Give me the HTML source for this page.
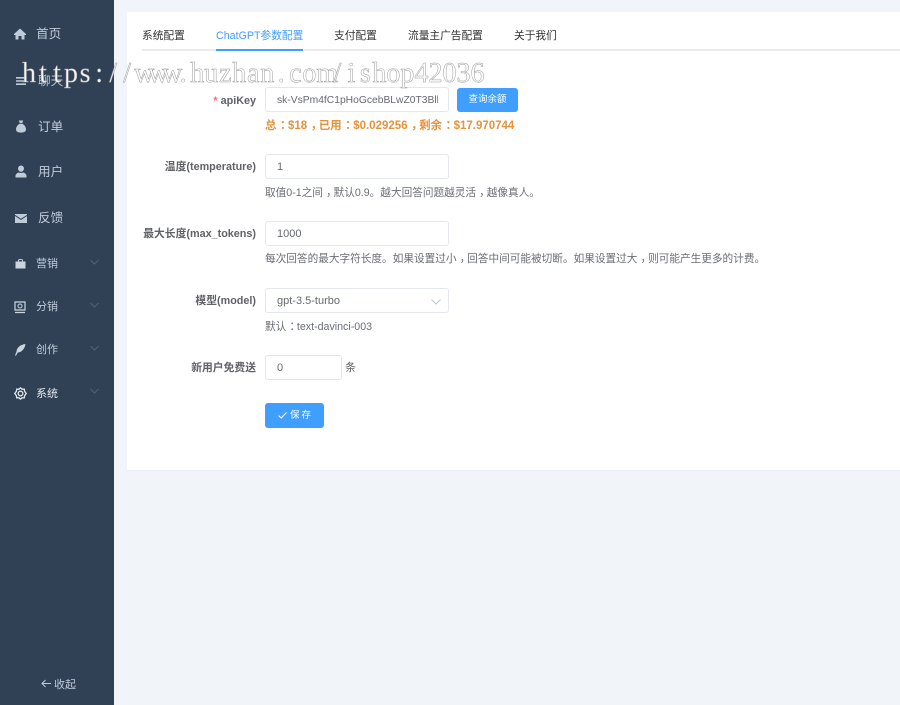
<!DOCTYPE html>
<html lang="zh">
<head>
<meta charset="utf-8">
<style>
*{box-sizing:border-box}
html,body{margin:0;padding:0;width:900px;height:705px;overflow:hidden;background:#f1f4f8;font-family:"Liberation Sans","Noto Sans CJK SC",sans-serif;}
#all{position:absolute;left:0;top:0;width:900px;height:705px;filter:blur(.3px)}
.a{position:absolute;white-space:nowrap}
#side{position:absolute;left:0;top:0;width:114px;height:705px;background:#304156}
.m{position:absolute;left:36px;color:#bfcbd9;font-size:12.6px;line-height:20px;white-space:nowrap}
.s{font-size:11px;left:36px}
.ic{position:absolute}
.chev{position:absolute;left:90px;width:9px;height:6px}
#card{position:absolute;left:127px;top:12px;width:773px;height:459px;background:#fff;border-bottom:1px solid #ebeef5}
.tab{position:absolute;top:29px;font-size:10.7px;line-height:14px;color:#303133;white-space:nowrap}
.lab{position:absolute;right:644px;font-size:10.8px;font-weight:bold;color:#606266;line-height:16px;white-space:nowrap}
.inp{position:absolute;left:265px;width:184px;height:25px;border:1px solid #e4e7ed;border-radius:3px;background:#fff;color:#66696f;font-size:11px;line-height:25px;padding-left:11px;white-space:nowrap;overflow:hidden}
.tip{position:absolute;left:265px;font-size:10.65px;color:#6b6e75;line-height:16px;white-space:nowrap}
.p{display:inline-block;width:1em;transform:translate(.3em,-.05em)}
#wm{position:absolute;left:22px;top:57px;font-family:"Liberation Serif",serif;font-size:28px;line-height:34px;color:rgba(255,255,255,.95);-webkit-text-stroke:.5px #9c9c9c;white-space:nowrap}
#wm span{display:inline-block;width:14.03px;text-align:center}
</style>
</head>
<body>
<div id="all">
<div id="side">
  <svg class="ic" style="left:14px;top:28px" width="12" height="12" viewBox="0 0 12 12"><path fill="#bfcbd9" d="M6 .5 0 6v1h1.500v4.500h3V8h3v3.500h3V7H12V6z"/></svg>
  <div class="m" style="top:24px">首页</div>

  <svg class="ic" style="left:16px;top:76px" width="10" height="10" viewBox="0 0 10 10"><path fill="#bfcbd9" d="M0 1h10v1.600H0zM0 4.200h10v1.600H0zM0 7.400h10V9H0z"/></svg>
  <div class="m" style="top:71px;left:38px">聊天</div>

  <svg class="ic" style="left:15px;top:120px" width="12" height="13" viewBox="0 0 12 13"><path fill="#bfcbd9" d="M3.800.5 8.200.5 7.300 3H4.700zM4.500 3.800h3C9.800 5.300 11 7.200 11 9.300 11 11.700 9.300 12.600 6 12.600S1 11.700 1 9.300C1 7.200 2.200 5.300 4.500 3.800z"/></svg>
  <div class="m" style="top:117px;left:38px">订单</div>

  <svg class="ic" style="left:15px;top:165px" width="12" height="13" viewBox="0 0 12 13"><path fill="#bfcbd9" d="M6 .5a3 3 0 0 1 3 3 3.300 3.300 0 0 1-3 3.300 3.300 3.300 0 0 1-3-3.300 3 3 0 0 1 3-3zM.5 12.500V11c0-2 2-3.300 3.300-3.500.7.500 3.700.500 4.400 0 1.300.2 3.300 1.500 3.300 3.500v1.500z"/></svg>
  <div class="m" style="top:162px;left:38px">用户</div>

  <svg class="ic" style="left:15px;top:214px" width="12" height="9" viewBox="0 0 12 9"><path fill="#bfcbd9" d="M0 0h12v.9L6 4.800 0 .9zM0 2 6 6 12 2v7H0z"/></svg>
  <div class="m" style="top:208px;left:38px">反馈</div>

  <svg class="ic" style="left:15px;top:258px" width="11" height="11" viewBox="0 0 11 11"><path fill="none" stroke="#bfcbd9" d="M3.500 4V2.500C3.500 1 7.500 1 7.500 2.500V4"/><path fill="#cbd5e0" d="M.5 3.500h10v7H.5z"/></svg>
  <div class="m s" style="top:254px">营销</div>
  <svg class="chev" style="top:259px" viewBox="0 0 9 6"><path d="M.5 1 4.500 5 8.500 1" fill="none" stroke="#4f6279" stroke-width="1"/></svg>

  <svg class="ic" style="left:14px;top:301px" width="12" height="13" viewBox="0 0 12 13"><path fill="none" stroke="#cbd5e0" stroke-width="1.200" d="M1 1h10v8H1zM1 11.500h10"/><circle cx="6" cy="5" r="2" fill="none" stroke="#cbd5e0"/></svg>
  <div class="m s" style="top:297px">分销</div>
  <svg class="chev" style="top:302px" viewBox="0 0 9 6"><path d="M.5 1 4.500 5 8.500 1" fill="none" stroke="#4f6279" stroke-width="1"/></svg>

  <svg class="ic" style="left:14px;top:344px" width="12" height="12" viewBox="0 0 12 12"><path fill="#cbd5e0" d="M11.500 0C6.500.5 2.800 3.500 2.500 7.500L1 11.500l1 .3L3.800 8.500C8 8.300 10.800 4.500 11.500 0z"/></svg>
  <div class="m s" style="top:340px">创作</div>
  <svg class="chev" style="top:345px" viewBox="0 0 9 6"><path d="M.5 1 4.500 5 8.500 1" fill="none" stroke="#4f6279" stroke-width="1"/></svg>

  <svg class="ic" style="left:14px;top:387px" width="13" height="13" viewBox="0 0 13 13"><path fill="none" stroke="#e3e8ee" stroke-width="1.300" d="M6.500.8 8 2.200 10.300 2.200 10.600 4.300 12.200 6.500 10.600 8.700 10.300 10.800 8 10.800 6.500 12.200 5 10.800 2.700 10.800 2.400 8.700.8 6.500 2.400 4.300 2.700 2.200 5 2.200z"/><circle cx="6.500" cy="6.500" r="2.300" fill="none" stroke="#e3e8ee" stroke-width="1.300"/></svg>
  <div class="m s" style="top:384px;color:#e3e8ee">系统</div>
  <svg class="chev" style="top:388px" viewBox="0 0 9 6"><path d="M.5 1 4.500 5 8.500 1" fill="none" stroke="#4f6279" stroke-width="1"/></svg>

  <svg class="ic" style="left:41px;top:679px" width="10" height="9" viewBox="0 0 10 9"><path d="M4.500 1 1 4.500 4.500 8M1 4.500h9" fill="none" stroke="#bfcbd9" stroke-width="1"/></svg>
  <div class="m s" style="top:675px;left:54px">收起</div>
</div>

<div id="card"></div>
<div class="a" style="left:142px;top:49px;width:758px;height:2px;background:#e9ecf0"></div>
<div class="a" style="left:216px;top:49px;width:87px;height:2px;background:#409eff"></div>
<div class="tab" style="left:142px">系统配置</div>
<div class="tab" style="left:216px;color:#409eff">ChatGPT参数配置</div>
<div class="tab" style="left:334px">支付配置</div>
<div class="tab" style="left:408px">流量主广告配置</div>
<div class="tab" style="left:514px">关于我们</div>

<div class="lab" style="top:93px"><span style="color:#f56c6c">* </span>apiKey</div>
<div class="inp" style="top:87px;padding-right:0"><span style="display:block;width:161px;overflow:hidden;font-size:10.3px">sk-VsPm4fC1pHoGcebBLwZ0T3BlbkFJ</span></div>
<div class="a" style="left:457px;top:88px;width:61px;height:24px;background:#409eff;border-radius:3px;color:#fff;font-size:9.500px;line-height:24px;text-align:center">查询余额</div>
<div class="a" style="left:265px;top:118px;font-size:11.5px;font-weight:bold;color:#e6923a;line-height:16px">总<span class="p">：</span>$18<span class="p">，</span>已用<span class="p">：</span>$0.029256<span class="p">，</span>剩余<span class="p">：</span>$17.970744</div>

<div class="lab" style="top:159px">温度(temperature)</div>
<div class="inp" style="top:154px">1</div>
<div class="tip" style="top:185px">取值0-1之间<span class="p">，</span>默认0.9。越大回答问题越灵活<span class="p">，</span>越像真人。</div>

<div class="lab" style="top:226px">最大长度(max_tokens)</div>
<div class="inp" style="top:221px">1000</div>
<div class="tip" style="top:251px">每次回答的最大字符长度。如果设置过小<span class="p">，</span>回答中间可能被切断。如果设置过大<span class="p">，</span>则可能产生更多的计费。</div>

<div class="lab" style="top:293px">模型(model)</div>
<div class="inp" style="top:288px">gpt-3.5-turbo</div>
<svg class="a" style="left:431px;top:299px" width="10" height="6" viewBox="0 0 10 6"><path d="M.5.500 5 5 9.500.500" fill="none" stroke="#c0c4cc" stroke-width="1"/></svg>
<div class="tip" style="top:319px">默认<span class="p">：</span>text-davinci-003</div>

<div class="lab" style="top:360px">新用户免费送</div>
<div class="inp" style="top:355px;width:77px">0</div>
<div class="a" style="left:345px;top:360px;font-size:11px;line-height:16px;color:#606266">条</div>

<div class="a" style="left:265px;top:403px;width:59px;height:25px;background:#409eff;border-radius:3px"></div>
<svg class="a" style="left:278px;top:412px" width="9" height="7" viewBox="0 0 9 7"><path d="M.5 3.500 3.300 6 8.500.5" fill="none" stroke="#fff" stroke-width="1"/></svg>
<div class="a" style="left:290px;top:408px;font-size:9.500px;line-height:15px;color:#fff;letter-spacing:2px">保存</div>

<div id="wm"><span>h</span><span>t</span><span>t</span><span>p</span><span>s</span><span>:</span><span>/</span><span>/</span><span>w</span><span>w</span><span>w</span><span>.</span><span>h</span><span>u</span><span>z</span><span>h</span><span>a</span><span>n</span><span>.</span><span>c</span><span>o</span><span>m</span><span>/</span><span>i</span><span>s</span><span>h</span><span>o</span><span>p</span><span>4</span><span>2</span><span>0</span><span>3</span><span>6</span></div>
</div>
</body>
</html>
